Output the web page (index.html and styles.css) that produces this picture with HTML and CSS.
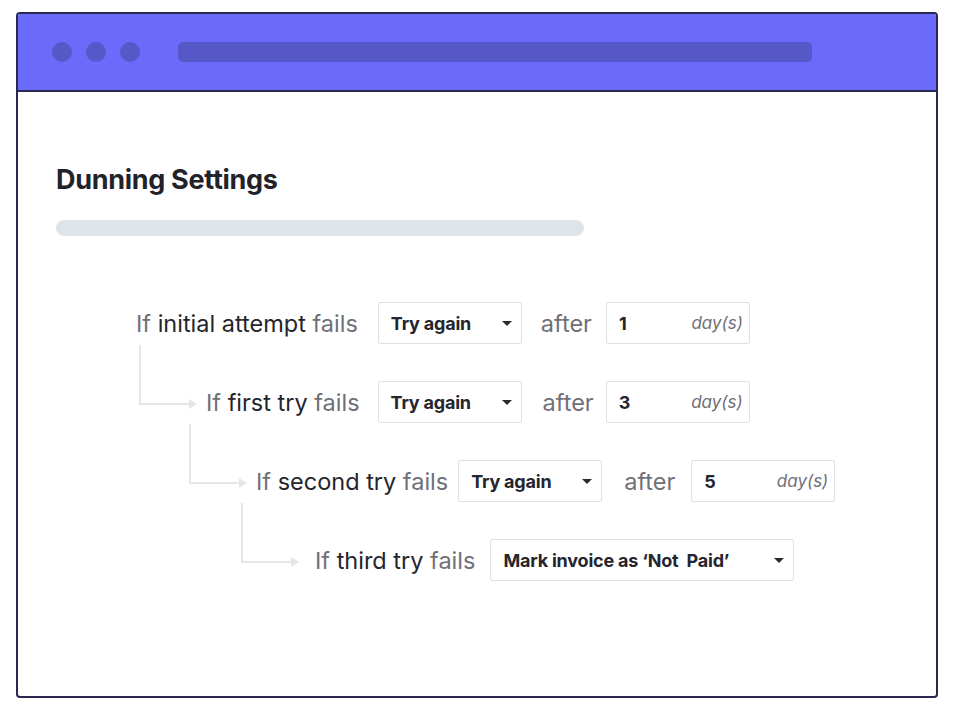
FILE: index.html
```html
<!DOCTYPE html>
<html lang="en">
<head>
<meta charset="utf-8">
<title>Dunning Settings</title>
<link rel="stylesheet" href="styles.css">
</head>
<body>
<div class="window">
  <div class="titlebar">
    <span class="dot"></span><span class="dot"></span><span class="dot"></span>
    <span class="urlbar"></span>
  </div>
  <div class="content">
    <h1 class="title">Dunning Settings</h1>
    <div class="divider"></div>
    <div class="rules">
      <div class="rule rule-1">
        <span class="label"><span class="muted">If</span> initial attempt <span class="muted">fails</span></span>
        <div class="select"><span>Try again</span><span class="caret"></span></div>
        <span class="after">after</span>
        <div class="days"><span class="num">1</span><span class="unit">day(s)</span></div>
      </div>
      <div class="rule rule-2">
        <span class="elbow"><span class="head"></span></span>
        <span class="label"><span class="muted">If</span> first try <span class="muted">fails</span></span>
        <div class="select"><span>Try again</span><span class="caret"></span></div>
        <span class="after">after</span>
        <div class="days"><span class="num">3</span><span class="unit">day(s)</span></div>
      </div>
      <div class="rule rule-3">
        <span class="elbow"><span class="head"></span></span>
        <span class="label"><span class="muted">If</span> second try <span class="muted">fails</span></span>
        <div class="select"><span>Try again</span><span class="caret"></span></div>
        <span class="after">after</span>
        <div class="days"><span class="num">5</span><span class="unit">day(s)</span></div>
      </div>
      <div class="rule rule-4">
        <span class="elbow"><span class="head"></span></span>
        <span class="label"><span class="muted">If</span> third try <span class="muted">fails</span></span>
        <div class="select select-wide"><span>Mark invoice as ‘Not&nbsp; Paid’</span><span class="caret"></span></div>
      </div>
    </div>
  </div>
</div>
</body>
</html>
```
FILE: styles.css
```css
* { box-sizing: border-box; }
html, body { background: #ffffff; }
body {
  margin: 12px 16px;
  font-family: Inter, "Noto Sans", sans-serif;
  color: #25252d;
}
.window {
  width: 922px;
  height: 686px;
  border: 2px solid #2a2850;
  border-radius: 4px;
  background: #fff;
  box-shadow: 0 4px 20px rgba(30, 30, 60, 0.10);
  overflow: hidden;
}
.titlebar {
  height: 78px;
  background: #6a6bfa;
  border-bottom: 2px solid #2a2850;
  display: flex;
  align-items: center;
  padding-left: 34px;
  gap: 14px;
}
.dot {
  width: 20px;
  height: 20px;
  border-radius: 50%;
  background: #5658c8;
}
.urlbar {
  margin-left: 24px;
  width: 634px;
  height: 20px;
  border-radius: 5px;
  background: #5658c8;
}
.content {
  padding: 70px 0 0 38px;
}
.title {
  margin: 0;
  font-size: 27px;
  line-height: 36px;
  font-weight: 700;
  letter-spacing: -0.3px;
  color: #22222a;
}
.divider {
  margin-top: 22px;
  width: 528px;
  height: 16px;
  border-radius: 8px;
  background: #dfe3ea;
}
.rules {
  margin-top: 66px;
  padding-left: 80px;
  display: flex;
  flex-direction: column;
  gap: 37px;
}
.rule {
  display: flex;
  align-items: center;
  height: 42px;
}
.rule-2 { margin-left: 3px; }
.rule-3 { margin-left: 53px; }
.rule-4 { margin-left: 105px; }
.label {
  font-size: 23.5px;
  color: #25252d;
  margin-right: 20px;
  white-space: nowrap;
}
.rule-2 .label { margin-right: 18px; }
.rule-3 .label { margin-right: 10px; }
.rule-4 .label { margin-right: 15px; }
.muted { color: #707078; }
.elbow {
  position: relative;
  align-self: flex-start;
  width: 50px;
  height: 60px;
  margin-top: -36px;
  margin-right: 17px;
  border-left: 2px solid #e6e6e9;
  border-bottom: 2px solid #e6e6e9;
}
.rule-4 .elbow { margin-right: 24px; }
.head {
  position: absolute;
  right: -8px;
  bottom: -6px;
  width: 0;
  height: 0;
  border-top: 5px solid transparent;
  border-bottom: 5px solid transparent;
  border-left: 8px solid #e6e6e9;
}
.select {
  width: 144px;
  height: 42px;
  border: 1px solid #e0e0e5;
  border-radius: 2px;
  display: flex;
  align-items: center;
  justify-content: space-between;
  padding: 0 9px 0 12px;
  font-size: 18px;
  font-weight: 700;
  color: #25252d;
  letter-spacing: -0.2px;
}
.select-wide { width: 304px; }
.caret {
  width: 0;
  height: 0;
  border-left: 5px solid transparent;
  border-right: 5px solid transparent;
  border-top: 5px solid #2a2a32;
}
.after {
  font-size: 23.5px;
  color: #707078;
  margin: 0 14px 0 19px;
}
.rule-2 .after { margin: 0 12px 0 21px; }
.rule-3 .after { margin: 0 16px 0 22px; }
.days {
  width: 144px;
  height: 42px;
  border: 1px solid #e0e0e5;
  border-radius: 2px;
  display: flex;
  align-items: center;
  justify-content: space-between;
  padding: 0 6px 0 12px;
}
.num {
  font-size: 18px;
  font-weight: 700;
  color: #25252d;
}
.unit {
  font-size: 17px;
  font-style: italic;
  color: #707078;
}
```
